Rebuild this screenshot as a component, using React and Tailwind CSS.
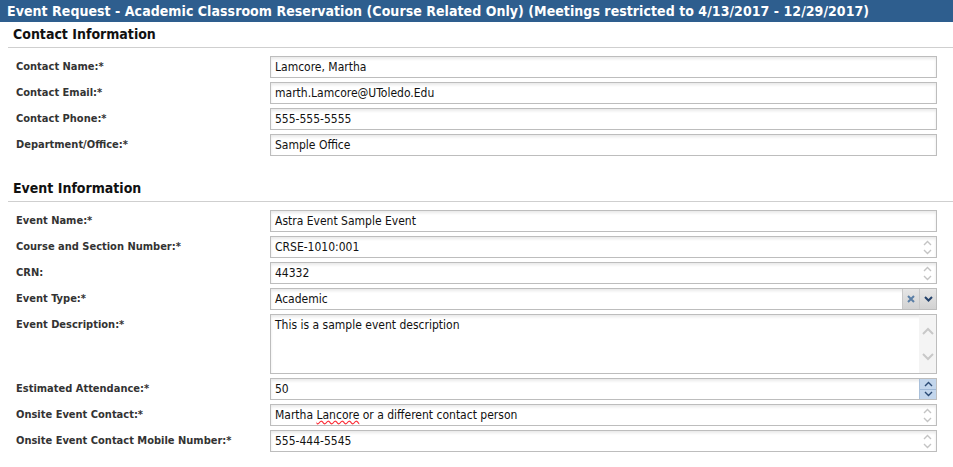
import React from "react";

const font = { fontFamily: '"DejaVu Sans Condensed", "DejaVu Sans", Tahoma, sans-serif' };

const Up = ({ className }) => (
  <svg width="9" height="6" viewBox="0 0 9 6" className={className}>
    <path d="M1 5 L4.5 1.5 L8 5" fill="none" stroke="currentColor" strokeWidth="1.4" />
  </svg>
);

const Down = ({ className }) => (
  <svg width="9" height="6" viewBox="0 0 9 6" className={className}>
    <path d="M1 1 L4.5 4.5 L8 1" fill="none" stroke="currentColor" strokeWidth="1.4" />
  </svg>
);

const Box = ({ children, right, tall }) => (
  <div
    className={`flex flex-1 border border-[#bdbdbd] bg-white shadow-[inset_0_2px_3px_rgba(0,0,0,0.09)] ${
      tall ? "h-[60px]" : "h-[22px]"
    }`}
  >
    <div className="flex-1 px-[4px] text-[12px] leading-[20px] text-[#111] truncate">{children}</div>
    {right}
  </div>
);

const Spin = ({ active }) =>
  active ? (
    <div className="flex w-[17px] flex-col border-l border-[#a9c0da] bg-[#c3d6ec]">
      <div className="flex flex-1 items-center justify-center border-b border-[#9fb8d6] text-[#2a4a74]">
        <Up />
      </div>
      <div className="flex flex-1 items-center justify-center text-[#2a4a74]">
        <Down />
      </div>
    </div>
  ) : (
    <div className="flex w-[17px] flex-col items-center justify-center gap-[3px] text-[#c4c4c4]">
      <Up />
      <Down />
    </div>
  );

const Select = () => (
  <div className="flex">
    <div className="flex w-[17px] items-center justify-center border-l border-[#c8c8c8] bg-gradient-to-b from-[#e6e6e6] to-[#d2d2d2] text-[#5b7fa6]">
      <svg width="8" height="8" viewBox="0 0 8 8">
        <path d="M1 1 L7 7 M7 1 L1 7" fill="none" stroke="currentColor" strokeWidth="2" />
      </svg>
    </div>
    <div className="flex w-[17px] items-center justify-center border-l border-[#c8c8c8] bg-gradient-to-b from-[#e6e6e6] to-[#d2d2d2] text-[#24426b]">
      <svg width="9" height="6" viewBox="0 0 9 6">
        <path d="M1 1 L4.5 4.5 L8 1" fill="none" stroke="currentColor" strokeWidth="2" />
      </svg>
    </div>
  </div>
);

const Scroll = () => (
  <div className="flex w-[17px] flex-col items-center justify-between bg-[#f4f4f4] py-[12px] text-[#c8c8c8]">
    <svg width="12" height="8" viewBox="0 0 12 8">
      <path d="M1 7 L6 2 L11 7" fill="none" stroke="currentColor" strokeWidth="2" />
    </svg>
    <svg width="12" height="8" viewBox="0 0 12 8">
      <path d="M1 1 L6 6 L11 1" fill="none" stroke="currentColor" strokeWidth="2" />
    </svg>
  </div>
);

const Row = ({ label, children, right, tall }) => (
  <div className="flex items-start pl-[8px] pr-[16px]">
    <div className="w-[254px] pt-[1px] text-[11px] font-bold leading-[20px] text-[#333]">{label}</div>
    <Box right={right} tall={tall}>
      {children}
    </Box>
  </div>
);

const Section = ({ title, className, children }) => (
  <div className={`pl-[8px] ${className || ""}`}>
    <div className="h-[26px] border-b border-[#cfcfcf] pl-[5px] text-[14px] font-bold leading-[25px] text-[#111]">
      {title}
    </div>
    <div className="flex flex-col gap-[4px] pt-[8px]">{children}</div>
  </div>
);

export default function App() {
  return (
    <div className="w-[953px] h-[467px] overflow-hidden bg-white" style={font}>
      <div className="h-[22px] bg-[#2e5e8e] pl-[7px] text-[14px] font-bold leading-[22px] tracking-[0.05px] text-white whitespace-nowrap">
        Event Request - Academic Classroom Reservation (Course Related Only) (Meetings restricted to 4/13/2017 - 12/29/2017)
      </div>
      <Section title="Contact Information">
        <Row label="Contact Name:*">Lamcore, Martha</Row>
        <Row label="Contact Email:*">marth.Lamcore@UToledo.Edu</Row>
        <Row label="Contact Phone:*">555-555-5555</Row>
        <Row label="Department/Office:*">Sample Office</Row>
      </Section>
      <Section title="Event Information" className="mt-[20px]">
        <Row label="Event Name:*">Astra Event Sample Event</Row>
        <Row label="Course and Section Number:*" right={<Spin />}>CRSE-1010:001</Row>
        <Row label="CRN:" right={<Spin />}>44332</Row>
        <Row label="Event Type:*" right={<Select />}>Academic</Row>
        <Row label="Event Description:*" right={<Scroll />} tall>
          This is a sample event description
        </Row>
        <Row label="Estimated Attendance:*" right={<Spin active />}>50</Row>
        <Row label="Onsite Event Contact:*" right={<Spin />}>
          Martha <span className="underline decoration-wavy decoration-red-500">Lancore</span> or a different contact person
        </Row>
        <Row label="Onsite Event Contact Mobile Number:*" right={<Spin />}>555-444-5545</Row>
      </Section>
    </div>
  );
}
